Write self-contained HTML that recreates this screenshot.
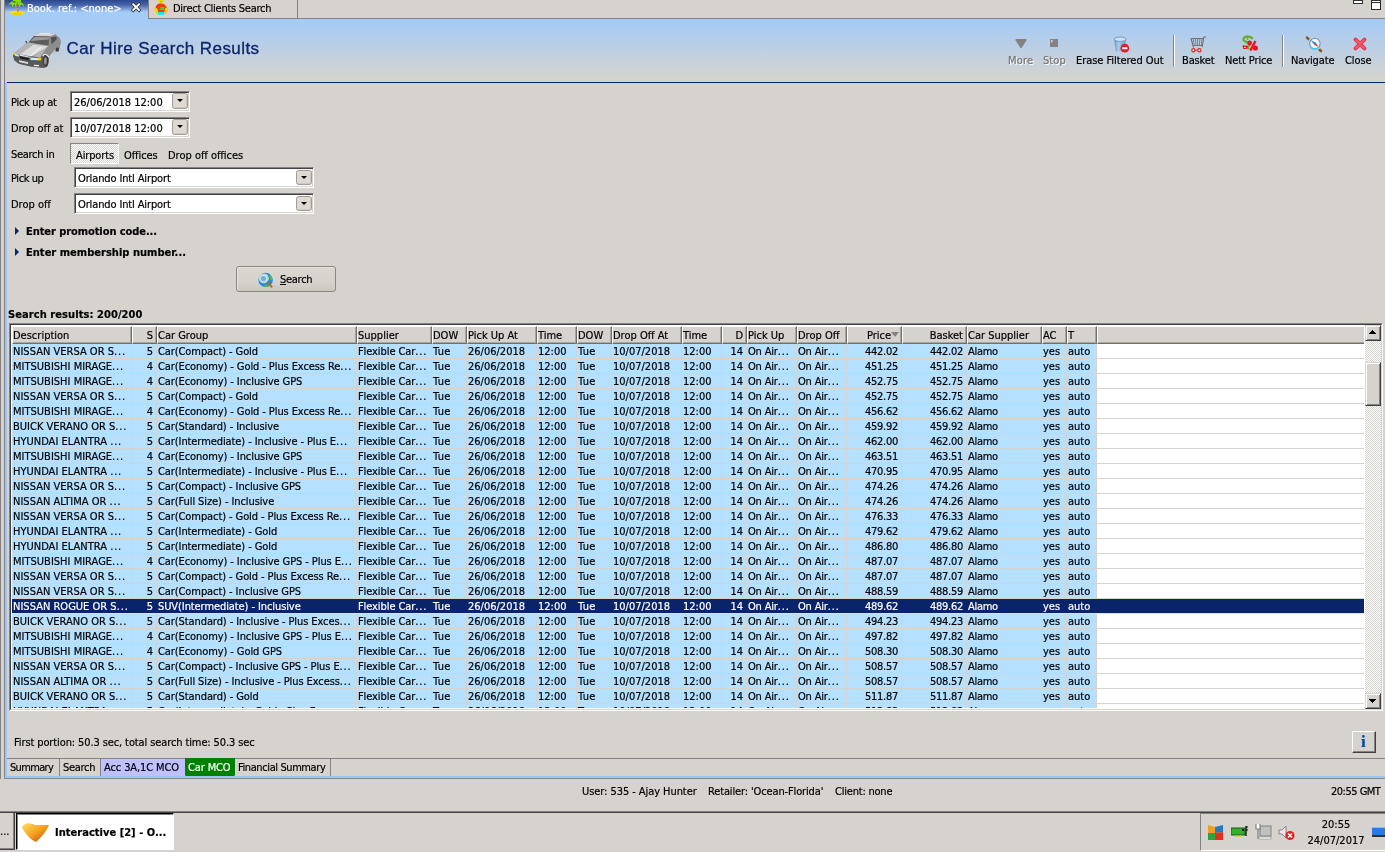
<!DOCTYPE html>
<html><head><meta charset="utf-8"><title>Car Hire Search Results</title>
<style>
html,body{margin:0;padding:0;}
body{width:1385px;height:852px;overflow:hidden;background:#d6d3ce;position:relative;
 font-family:"DejaVu Sans Condensed","DejaVu Sans","Liberation Sans",sans-serif;font-size:11px;color:#000;line-height:13px;}
div,span,i,b,svg{position:absolute;box-sizing:border-box;white-space:nowrap;}
i{display:block;font-style:normal;}
.t{height:13px;line-height:13px;margin-top:1px;}
/* chrome */
#l0{left:0;top:0;width:1px;height:779px;background:#848284;}
#l4{left:4px;top:0;width:1px;height:779px;background:#848284;}
#l5{left:5px;top:19px;width:2px;height:759px;background:#9dc5f5;}
#tabline{left:148px;top:18px;width:1237px;height:1px;background:#848284;}
#tab1{left:5px;top:0;width:143px;height:19px;background:linear-gradient(#2b4690 0px,#4664a8 5px,#a5cbf7 12px,#a5cbf7 19px);color:#fff;}
#tab2{left:148px;top:0;width:150px;height:19px;border-left:1px solid #848284;border-right:1px solid #848284;border-bottom:1px solid #848284;}
#hdr{left:5px;top:19px;width:1380px;height:63px;background:linear-gradient(#a5cbf7 0px,#a5cbf7 2px,#d6d3ce 60px,#d6d3ce 63px);}
#navy{left:7px;top:82px;width:1378px;height:1px;background:#0a246a;}
#title{-webkit-text-stroke:0.3px #0a246a;left:66.5px;top:38px;font-family:"Liberation Sans",sans-serif;font-size:17px;line-height:22px;height:22px;color:#0a246a;}
.tb{font-size:11px;height:13px;line-height:13px;top:54px;}
.dis{color:#757575;text-shadow:1px 1px 0 #fff;}
.sep{top:35px;width:2px;height:32px;border-left:1px solid #848284;border-right:1px solid #fff;}
/* inputs */
.inp{background:#fff;border:1px solid;border-color:#848284 #fff #fff #848284;box-shadow:inset 1px 1px 0 #424142, inset -1px -1px 0 #d6d3ce;}
.inp .t{left:3px;top:3px;}
.ddb{width:16px;height:16px;background:#dedad3;border:1px solid #a19d95;border-radius:2.5px;box-shadow:inset -1px -1px 0 #cdc9c1;}
.ddb:after{content:"";position:absolute;left:4px;top:5px;border:3px solid transparent;border-top:3px solid #000;border-bottom:0;}
.btn{background:#d6d3ce;border:1px solid;border-color:#fff #424142 #424142 #fff;box-shadow:inset -1px -1px 0 #848284;}
.bold{font-weight:bold;}
.tri{width:0;height:0;border:4px solid transparent;border-left:4px solid #0a246a;border-right:0;}
/* grid */
#gridwrap{left:9px;top:323px;width:1374px;height:388px;border:1px solid;border-color:#848284 #fff #fff #848284;}
#gridwrap2{left:0;top:0;width:1372px;height:386px;border:1px solid;border-color:#424142 #d6d3ce #d6d3ce #424142;background:#fff;overflow:hidden;}
#grid{left:1px;top:1px;width:1352px;height:382px;overflow:hidden;
 background:repeating-linear-gradient(#fff 0px,#fff 14px,#d6d3ce 14px,#d6d3ce 15px);background-position:0 18px;}
.hc{top:0;height:18px;background:#d6d3ce;border:1px solid;border-color:#fff #736f66 #736f66 #fff;box-shadow:inset -1px -1px 0 #a9a69e;}
.hc span{left:0px;top:2px;height:13px;line-height:13px;}
.hc.r span{left:auto;right:3px;}
.sortarrow{right:2px;top:5px;width:0;height:0;border:4px solid transparent;border-top:5px solid #848284;border-bottom:0;}
.row{left:0;width:1085px;height:15px;background:#b5e0ff;border-bottom:1px solid #d6d3ce;}
.row.sel{width:1352px;background:#0a246a;color:#fff;z-index:2;border-bottom-color:#cfe6f8;}
.c{top:1px;height:14px;line-height:14px;padding-left:1px;overflow:hidden;}
.c.r{text-align:right;padding-right:3px;padding-left:0;}
.vl{z-index:1;top:18px;width:1px;height:370px;background:#d6d3ce;}
/* scrollbar */
#sb{left:1354px;top:0;width:16px;height:384px;background:repeating-conic-gradient(#fff 0 25%,#d6d3ce 0 50%) 0 0/2px 2px;}
.sbb{left:0;width:16px;height:16px;background:#d6d3ce;border:1px solid;border-color:#d6d3ce #424142 #424142 #d6d3ce;box-shadow:inset 1px 1px 0 #fff, inset -1px -1px 0 #848284;}
/* bottom */
.btab{top:759px;height:18px;border-right:1px solid #848284;}
.btab .t{top:1px;}
#botline{left:5px;top:776px;width:1380px;height:3px;background:#9dc5f5;border-bottom:1px solid #8c8a86;}
#statline{left:0;top:811px;width:1385px;height:2px;background:#424142;border-top:1px solid #848284}
.sbtn{border:1px solid #8a8780;border-radius:3px;background:linear-gradient(#dad6cf,#d6d3ce 60%,#cbc7bf);box-shadow:inset 1px 1px 0 #e6e3dd;}
#root{left:0;top:0;width:1385px;height:852px;will-change:transform;-webkit-text-stroke:0.2px;}
.e{position:static;font-weight:normal;letter-spacing:.85px;}

</style></head>
<body>
<div id="root">
<i id="l0"></i><i id="l4"></i><i id="l5"></i>
<div id="tab1">
 <svg style="left:2px;top:0" width="20" height="16" viewBox="0 0 20 16"><ellipse cx="10" cy="12.6" rx="7.5" ry="1.9" fill="#ffe400"/><ellipse cx="10" cy="13.8" rx="5" ry="1.2" fill="#ffc800"/><path d="M9.2 2.5 L11.8 12 L10 12.2 Z" fill="#f0a000"/><path d="M9.6 5 L10.6 5 M9.8 7.5 L11 7.5 M10.2 10 L11.4 10" stroke="#c05000" stroke-width=".9"/><path d="M10 3 C8 .5 4 .5 1 5.5 C3.5 3.5 5 3.8 5.5 7.5 C6.5 4.5 7.5 4 8 4.2 C8 5.5 8 6.5 8.6 7.8 C9.2 5 9.6 4 10.2 3.6 C11.5 4.5 12.2 6 12.4 8.4 C13.2 5.5 13.6 4.8 14.2 4.6 C15.5 5 16.4 6 17 7.2 C17 4 15 .5 10 3Z M6 0 h8 v2.6 h-8z" fill="#84e000"/></svg>
 <span class="t" style="letter-spacing:0.011px;left:22px;top:1px">Book. ref.: &lt;none&gt;</span>
 <svg style="left:125px;top:2px" width="12" height="11" viewBox="0 0 12 11"><path d="M3.2 2.3 L9 8 M9 2.3 L3.2 8" stroke="#2c2c2c" stroke-width="3.4" stroke-linecap="square"/><path d="M3.2 2.3 L9 8 M9 2.3 L3.2 8" stroke="#fff" stroke-width="1.9" stroke-linecap="square"/></svg>
</div>
<div id="tab2">
 <svg style="left:4px;top:0" width="17" height="16" viewBox="0 0 17 16"><ellipse cx="7.8" cy="1.1" rx="2.5" ry="2.3" fill="#ffd400"/><ellipse cx="7.9" cy="1.6" rx="1" ry=".5" fill="#ff9000"/><path d="M4.6 4 L7 3.4 L8.6 3.4 L11 4 L14 7.2 L12 9.5 L11.5 12 L5 12 L4.6 9.5 L2.2 7.2 Z" fill="#f83a04"/><path d="M2.2 7.2 L4 8.6 L5 13.6 L3.6 14.4 L1 9.2 Z" fill="#ffd000"/><path d="M14 7.2 L12.2 8.6 L11.4 13.6 L13 14.4 L15.6 9.2 Z" fill="#ffc800"/><rect x="7.2" y="7" width="4.2" height="3" fill="#22e022"/><rect x="5" y="12" width="6.2" height="2.7" fill="#00f0e8"/></svg>
 <span class="t" style="letter-spacing:-0.257px;left:24px;top:1px">Direct Clients Search</span>
</div>
<i id="tabline"></i>
<!-- window min/max -->
<i style="left:1353px;top:0;width:10px;height:4px;border:1px solid #303030;background:#fff"></i>
<i style="left:1371px;top:0;width:10px;height:10px;border:1px solid #303030;background:#fff"></i>
<i style="left:1371px;top:2px;width:10px;height:1px;background:#303030"></i>
<div id="hdr"></div>
<i id="navy"></i>
<!-- car icon -->
<svg style="left:8px;top:28px" width="60" height="46" viewBox="0 0 60 46">
 <polygon points="5.1,28.1 5.9,25.4 17.8,15.7 20.5,14.6 25.9,8.1 28.1,5.9 32.4,5.1 41.1,5.1 47.0,6.2 51.9,10.3 52.7,14.6 50.8,22.7 47.0,23.2 41.1,29.2 40.0,37.8 36.8,40.0 22.7,38.4 10.8,35.7 6.5,32.4" fill="#858585"/>
 <polygon points="25.9,8.1 28.1,5.9 32.4,5.1 41.1,5.1 47.0,6.2 48.6,8.6 44.9,8.1 41.6,8.6" fill="#d6d6d6"/>
 <polygon points="30.3,5.7 32.4,5.1 41.1,5.1 43.2,5.8" fill="#f2f2f2"/>
 <polygon points="20.5,14.6 25.9,8.1 41.6,8.6 40.5,17.8 32.4,17.3" fill="#5e5e5e"/>
 <polygon points="22.7,13.0 26.5,8.9 41.1,9.3 40.8,11.6" fill="#9a9a9a"/>
 <polygon points="25.9,13.5 34.6,12.2 34.1,17.0 25.4,16.2" fill="#5a5a5a"/>
 <polygon points="5.9,25.4 17.8,15.7 20.5,14.6 40.5,17.8 34.6,25.9 32.4,29.5 11.9,27.0" fill="#b4b4b4"/>
 <polygon points="12.4,25.9 25.4,16.8 40.0,18.4 22.7,28.6" fill="#d9d9d9"/>
 <polygon points="21.6,28.1 32.4,18.9 33.5,19.0 23.0,28.6" fill="#f4f4f4"/>
 <polygon points="40.5,17.8 41.6,8.6 47.0,6.2 51.9,10.3 52.7,14.6 50.8,22.7 47.0,23.2 48.6,20.0 41.1,29.2 40.0,27.0 34.6,25.9" fill="#8d8d8d"/>
 <polygon points="42.7,9.5 48.1,8.6 48.9,11.1 43.8,16.2" fill="#505050"/>
 <polygon points="41.6,28.1 48.6,20.0 48.9,20.5 41.9,28.9" fill="#e8e8e8"/>
 <polygon points="5.1,28.1 5.9,25.4 11.9,27.0 32.4,29.5 34.6,25.9 35.7,33.5 36.8,40.0 22.7,38.4 10.8,35.7 6.5,32.4" fill="#5a5a5a"/>
 <polygon points="11.6,28.1 21.1,30.3 20.5,32.2 12.2,30.4" fill="#1e1e1e"/>
 <polygon points="11.9,26.5 22.7,28.9 22.2,29.8 11.6,27.7" fill="#e6e6e6"/>
 <polygon points="6.1,25.1 10.8,27.0 10.8,28.8 7.0,27.7" fill="#c4e4f8"/>
 <polygon points="5.8,25.0 7.3,25.3 7.3,27.3 6.1,27.0" fill="#e8d020"/>
 <polygon points="22.2,29.6 30.0,30.0 30.0,32.3 22.7,32.0" fill="#cdeaff"/>
 <polygon points="30.0,29.5 33.2,29.6 33.1,32.3 30.0,32.4" fill="#f2d400"/>
 <polygon points="11.1,32.3 20.0,34.3 20.0,36.1 11.1,33.9" fill="#e2e2e2"/>
 <polygon points="25.9,36.8 31.1,37.0 31.1,38.2 25.9,37.9" fill="#f0f0f0"/>
 <ellipse cx="37.8" cy="32.4" rx="2.8" ry="6.5" fill="#3a3a3a"/>
 <ellipse cx="37.4" cy="33.0" rx="1.3" ry="3.8" fill="#9a9a9a"/>
 <path d="M34.6 28.1 Q37.3 23.8 41.2 29.5" stroke="#ececec" stroke-width="1.2" fill="none"/>
 <ellipse cx="49.3" cy="21.6" rx="1.7" ry="2.2" fill="#3c3c3c"/>
 <polygon points="17.0,12.9 19.0,13.3 19.2,15.2 18.1,14.9" fill="#4a4a4a"/>
</svg>
<span id="title" style="letter-spacing:0.423px;">Car Hire Search Results</span>
<!-- toolbar -->
<svg style="left:1014px;top:38px" width="14" height="12" viewBox="0 0 14 12"><path d="M1.6 1 H12.4 V2.4 L7.6 10 H6.4 L1.6 2.4 Z" fill="#848284"/></svg>
<span class="tb dis" style="letter-spacing:0.171px;left:1008px">More</span>
<svg style="left:1050px;top:39px" width="10" height="10" viewBox="0 0 10 10"><rect x="0" y="0" width="8" height="8" fill="#848284"/><rect x="1" y="1" width="1.6" height="2.4" fill="#d0d0d0"/></svg>
<span class="tb dis" style="letter-spacing:0.075px;left:1043px">Stop</span>
<svg style="left:1112px;top:36px" width="18" height="18" viewBox="0 0 18 18"><defs><linearGradient id="bk" x1="0" x2="1"><stop offset="0" stop-color="#5f93bf"/><stop offset=".35" stop-color="#a9cde8"/><stop offset="1" stop-color="#6f9fc8"/></linearGradient></defs><path d="M2.2 3 L3.8 15.6 H12.4 L14 3 Z" fill="url(#bk)"/><ellipse cx="8.1" cy="3.2" rx="5.9" ry="2.2" fill="#cfe3f2" stroke="#6f9cc0" stroke-width="1"/><circle cx="12.8" cy="12.2" r="4.4" fill="#e0202a"/><rect x="10.2" y="11.3" width="5.2" height="1.9" fill="#fff"/></svg>
<span class="tb" style="letter-spacing:-0.051px;left:1076px">Erase Filtered Out</span>
<i class="sep" style="left:1173px"></i>
<svg style="left:1189px;top:36px" width="18" height="18" viewBox="0 0 18 18"><path d="M2 2.5 H14.5 M2 2.5 L4 9.5 H13.5 M4 9.5 L4.5 11.5" stroke="#707070" stroke-width="1.1" fill="none"/><path d="M4.2 2.5 L5.2 9.5 M6.4 2.5 L7 9.5 M8.6 2.5 V9.5 M10.8 2.5 L10.4 9.5 M13 2.5 L12.2 9.5" stroke="#848284" stroke-width="1"/><path d="M14.8 1 H17 M14.8 1 L13.2 11" stroke="#707070" stroke-width="1.1" fill="none"/><path d="M5 14.2 H10" stroke="#e02020" stroke-width="1"/><circle cx="4.4" cy="14.2" r="1.6" fill="#fff" stroke="#e02020" stroke-width="1.2"/><circle cx="10.4" cy="14.2" r="1.6" fill="#fff" stroke="#e02020" stroke-width="1.2"/></svg>
<span class="tb" style="letter-spacing:-0.155px;left:1182px">Basket</span>
<svg style="left:1240px;top:35px" width="20" height="18" viewBox="0 0 20 18"><path d="M12.5 4 C11 .6 3.8 1 3.4 4.4 C3.2 7.2 9 6.6 9.4 9.6 C9.6 12 5 12.6 2.6 10.6" stroke="#6fae24" stroke-width="2.3" fill="none"/><path d="M7.6 .6 V5" stroke="#6fae24" stroke-width="1.2"/><rect x="3" y="10.8" width="4.6" height="3.2" fill="#f01424"/><rect x="4" y="12" width="2" height=".9" fill="#ffd0d0"/><circle cx="9.6" cy="8" r="2.4" fill="#f01424"/><circle cx="15.4" cy="13" r="2.6" fill="#f01424"/><path d="M15.4 6 L10.4 15.6" stroke="#f01424" stroke-width="2.4"/><path d="M8.4 12 l1.6 2 l-2.2 .6z" fill="#6fae24"/></svg>
<span class="tb" style="letter-spacing:-0.122px;left:1225px">Nett Price</span>
<i class="sep" style="left:1282px"></i>
<svg style="left:1305px;top:34px" width="20" height="20" viewBox="0 0 20 20"><path d="M2 3.6 L16 17" stroke="#8a5a1c" stroke-width="2.6" stroke-linecap="round"/><circle cx="9.9" cy="9.6" r="6.5" fill="#eef7ff" stroke="#c4ccd6" stroke-width="1.2"/><circle cx="9.9" cy="9.6" r="5.3" fill="none" stroke="#4a90d8" stroke-width="1.1"/><path d="M5.2 12.6 A5.3 5.3 0 0 0 13.6 13.4" stroke="#38d0f0" stroke-width="1.5" fill="none"/><path d="M5.8 6.2 L10.8 8.8 L9.1 10.5 Z" fill="#1c7ce0"/><path d="M13.2 13 L9.1 10.5 L10.8 8.8 Z" fill="#f0200c"/></svg>
<span class="tb" style="letter-spacing:-0.124px;left:1291px">Navigate</span>
<svg style="left:1352.5px;top:37px" width="14" height="14" viewBox="0 0 14 14"><path d="M2.6 2.6 L11.4 11.4 M11.4 2.6 L2.6 11.4" stroke="#e83448" stroke-width="3.8" stroke-linecap="round"/><path d="M3 3 L11 11 M11 3 L3 11" stroke="#f4667a" stroke-width="1.4" stroke-linecap="round"/></svg>
<span class="tb" style="letter-spacing:-0.094px;left:1345px">Close</span>

<!-- form -->
<span class="t" style="letter-spacing:-0.294px;left:11px;top:95px">Pick up at</span>
<div class="inp" style="left:70px;top:91px;width:120px;height:21px"><span class="t">26/06/2018 12:00</span><i class="ddb" style="left:101px;top:1px"></i></div>
<span class="t" style="letter-spacing:-0.063px;left:11px;top:121px">Drop off at</span>
<div class="inp" style="left:70px;top:117px;width:120px;height:21px"><span class="t">10/07/2018 12:00</span><i class="ddb" style="left:101px;top:1px"></i></div>
<span class="t" style="letter-spacing:-0.295px;left:11px;top:147px">Search in</span>
<div style="left:70px;top:143px;width:49px;height:21px;border:1px solid;border-color:#848284 #fff #fff #848284;background:repeating-conic-gradient(#fff 0 25%,#d6d3ce 0 50%) 0 0/2px 2px"><span class="t" style="letter-spacing:-0.141px;left:5px;top:4px">Airports</span></div>
<span class="t" style="letter-spacing:-0.08px;left:124px;top:148px">Offices</span>
<span class="t" style="left:168px;top:148px">Drop off offices</span>
<span class="t" style="letter-spacing:-0.408px;left:11px;top:171px">Pick up</span>
<div class="inp" style="left:74px;top:167px;width:240px;height:21px"><span class="t" style="letter-spacing:-0.127px">Orlando Intl Airport</span><i class="ddb" style="left:221px;top:2px;height:15px"></i></div>
<span class="t" style="left:11px;top:197px">Drop off</span>
<div class="inp" style="left:74px;top:193px;width:240px;height:21px"><span class="t" style="letter-spacing:-0.127px">Orlando Intl Airport</span><i class="ddb" style="left:221px;top:2px;height:15px"></i></div>
<i class="tri" style="left:15px;top:227px"></i>
<span class="t bold" style="letter-spacing:-0.071px;left:26px;top:224px">Enter promotion code...</span>
<i class="tri" style="left:15px;top:248px"></i>
<span class="t bold" style="letter-spacing:0.028px;left:26px;top:245px">Enter membership number...</span>
<div class="sbtn" style="left:236px;top:266px;width:100px;height:26px">
 <svg style="left:20px;top:4px" width="18" height="18" viewBox="0 0 18 18"><circle cx="8.6" cy="9" r="7.2" fill="#1e8ae0"/><path d="M12.5 3.5 C15 5 15.8 8 14.6 10 C13.4 9 12.6 7 12.5 3.5Z M7 14.5 C9 13 11 13.6 11.6 15.4 C10 16.4 8.4 16.4 7 14.5Z" fill="#58c030"/><circle cx="6.8" cy="7.4" r="4.3" fill="#cfe8e8" stroke="#c8ccd4" stroke-width="1.4"/><circle cx="6.4" cy="7.6" r="2.6" fill="#5ab8d8"/><path d="M10.2 11 L15.2 16.4" stroke="#b86a18" stroke-width="2"/></svg>
 <span class="t" style="letter-spacing:-0.283px;left:43px;top:5px"><u>S</u>earch</span>
</div>
<span class="t bold" style="letter-spacing:0.081px;left:8px;top:307px">Search results: 200/200</span>

<div id="gridwrap"><div id="gridwrap2">
<div id="grid">
<div class="hc" style="left:0px;width:120px"><span>Description</span></div>
<div class="hc r" style="left:120px;width:25px"><span>S</span></div>
<div class="hc" style="left:145px;width:200px"><span>Car Group</span></div>
<div class="hc" style="left:345px;width:75px"><span>Supplier</span></div>
<div class="hc" style="left:420px;width:35px"><span>DOW</span></div>
<div class="hc" style="left:455px;width:70px"><span>Pick Up At</span></div>
<div class="hc" style="left:525px;width:40px"><span>Time</span></div>
<div class="hc" style="left:565px;width:35px"><span>DOW</span></div>
<div class="hc" style="left:600px;width:70px"><span>Drop Off At</span></div>
<div class="hc" style="left:670px;width:40px"><span>Time</span></div>
<div class="hc r" style="left:710px;width:25px"><span>D</span></div>
<div class="hc" style="left:735px;width:50px"><span>Pick Up</span></div>
<div class="hc" style="left:785px;width:50px"><span>Drop Off</span></div>
<div class="hc r" style="left:835px;width:55px"><span><b style="position:relative;font-weight:normal;right:7px">Price</b></span><i class="sortarrow"></i></div>
<div class="hc r" style="left:890px;width:65px"><span>Basket</span></div>
<div class="hc" style="left:955px;width:75px"><span>Car Supplier</span></div>
<div class="hc" style="left:1030px;width:25px"><span>AC</span></div>
<div class="hc" style="left:1055px;width:30px"><span>T</span></div>
<div class="hc" style="left:1085px;width:267px;border-right:0;box-shadow:inset 0 -1px 0 #a9a69e"></div>
<div class="row" style="top:18px">
<span class="c" style="left:0px;width:119px;letter-spacing:0.011px">NISSAN VERSA OR S<b class="e">...</b></span>
<span class="c r" style="left:120px;width:24px">5</span>
<span class="c" style="left:145px;width:199px;letter-spacing:-0.089px">Car(Compact) - Gold</span>
<span class="c" style="left:345px;width:74px;letter-spacing:-0.083px">Flexible Car<b class="e">...</b></span>
<span class="c" style="left:420px;width:34px;letter-spacing:0.283px">Tue</span>
<span class="c" style="left:455px;width:69px">26/06/2018</span>
<span class="c" style="left:525px;width:39px">12:00</span>
<span class="c" style="left:565px;width:34px;letter-spacing:0.283px">Tue</span>
<span class="c" style="left:600px;width:69px">10/07/2018</span>
<span class="c" style="left:670px;width:39px">12:00</span>
<span class="c r" style="left:710px;width:24px">14</span>
<span class="c" style="left:735px;width:49px;letter-spacing:-0.176px">On Air<b class="e">...</b></span>
<span class="c" style="left:785px;width:49px;letter-spacing:-0.176px">On Air<b class="e">...</b></span>
<span class="c r" style="left:835px;width:54px;letter-spacing:-0.25px">442.02</span>
<span class="c r" style="left:890px;width:64px;letter-spacing:-0.25px">442.02</span>
<span class="c" style="left:955px;width:74px;letter-spacing:-0.296px">Alamo</span>
<span class="c" style="left:1030px;width:24px">yes</span>
<span class="c" style="left:1055px;width:29px">auto</span>
</div>
<div class="row" style="top:33px">
<span class="c" style="left:0px;width:119px;letter-spacing:0.011px">MITSUBISHI MIRAGE<b class="e">...</b></span>
<span class="c r" style="left:120px;width:24px">4</span>
<span class="c" style="left:145px;width:199px;letter-spacing:-0.089px">Car(Economy) - Gold - Plus Excess Re<b class="e">...</b></span>
<span class="c" style="left:345px;width:74px;letter-spacing:-0.083px">Flexible Car<b class="e">...</b></span>
<span class="c" style="left:420px;width:34px;letter-spacing:0.283px">Tue</span>
<span class="c" style="left:455px;width:69px">26/06/2018</span>
<span class="c" style="left:525px;width:39px">12:00</span>
<span class="c" style="left:565px;width:34px;letter-spacing:0.283px">Tue</span>
<span class="c" style="left:600px;width:69px">10/07/2018</span>
<span class="c" style="left:670px;width:39px">12:00</span>
<span class="c r" style="left:710px;width:24px">14</span>
<span class="c" style="left:735px;width:49px;letter-spacing:-0.176px">On Air<b class="e">...</b></span>
<span class="c" style="left:785px;width:49px;letter-spacing:-0.176px">On Air<b class="e">...</b></span>
<span class="c r" style="left:835px;width:54px;letter-spacing:-0.25px">451.25</span>
<span class="c r" style="left:890px;width:64px;letter-spacing:-0.25px">451.25</span>
<span class="c" style="left:955px;width:74px;letter-spacing:-0.296px">Alamo</span>
<span class="c" style="left:1030px;width:24px">yes</span>
<span class="c" style="left:1055px;width:29px">auto</span>
</div>
<div class="row" style="top:48px">
<span class="c" style="left:0px;width:119px;letter-spacing:0.011px">MITSUBISHI MIRAGE<b class="e">...</b></span>
<span class="c r" style="left:120px;width:24px">4</span>
<span class="c" style="left:145px;width:199px;letter-spacing:-0.089px">Car(Economy) - Inclusive GPS</span>
<span class="c" style="left:345px;width:74px;letter-spacing:-0.083px">Flexible Car<b class="e">...</b></span>
<span class="c" style="left:420px;width:34px;letter-spacing:0.283px">Tue</span>
<span class="c" style="left:455px;width:69px">26/06/2018</span>
<span class="c" style="left:525px;width:39px">12:00</span>
<span class="c" style="left:565px;width:34px;letter-spacing:0.283px">Tue</span>
<span class="c" style="left:600px;width:69px">10/07/2018</span>
<span class="c" style="left:670px;width:39px">12:00</span>
<span class="c r" style="left:710px;width:24px">14</span>
<span class="c" style="left:735px;width:49px;letter-spacing:-0.176px">On Air<b class="e">...</b></span>
<span class="c" style="left:785px;width:49px;letter-spacing:-0.176px">On Air<b class="e">...</b></span>
<span class="c r" style="left:835px;width:54px;letter-spacing:-0.25px">452.75</span>
<span class="c r" style="left:890px;width:64px;letter-spacing:-0.25px">452.75</span>
<span class="c" style="left:955px;width:74px;letter-spacing:-0.296px">Alamo</span>
<span class="c" style="left:1030px;width:24px">yes</span>
<span class="c" style="left:1055px;width:29px">auto</span>
</div>
<div class="row" style="top:63px">
<span class="c" style="left:0px;width:119px;letter-spacing:0.011px">NISSAN VERSA OR S<b class="e">...</b></span>
<span class="c r" style="left:120px;width:24px">5</span>
<span class="c" style="left:145px;width:199px;letter-spacing:-0.089px">Car(Compact) - Gold</span>
<span class="c" style="left:345px;width:74px;letter-spacing:-0.083px">Flexible Car<b class="e">...</b></span>
<span class="c" style="left:420px;width:34px;letter-spacing:0.283px">Tue</span>
<span class="c" style="left:455px;width:69px">26/06/2018</span>
<span class="c" style="left:525px;width:39px">12:00</span>
<span class="c" style="left:565px;width:34px;letter-spacing:0.283px">Tue</span>
<span class="c" style="left:600px;width:69px">10/07/2018</span>
<span class="c" style="left:670px;width:39px">12:00</span>
<span class="c r" style="left:710px;width:24px">14</span>
<span class="c" style="left:735px;width:49px;letter-spacing:-0.176px">On Air<b class="e">...</b></span>
<span class="c" style="left:785px;width:49px;letter-spacing:-0.176px">On Air<b class="e">...</b></span>
<span class="c r" style="left:835px;width:54px;letter-spacing:-0.25px">452.75</span>
<span class="c r" style="left:890px;width:64px;letter-spacing:-0.25px">452.75</span>
<span class="c" style="left:955px;width:74px;letter-spacing:-0.296px">Alamo</span>
<span class="c" style="left:1030px;width:24px">yes</span>
<span class="c" style="left:1055px;width:29px">auto</span>
</div>
<div class="row" style="top:78px">
<span class="c" style="left:0px;width:119px;letter-spacing:0.011px">MITSUBISHI MIRAGE<b class="e">...</b></span>
<span class="c r" style="left:120px;width:24px">4</span>
<span class="c" style="left:145px;width:199px;letter-spacing:-0.089px">Car(Economy) - Gold - Plus Excess Re<b class="e">...</b></span>
<span class="c" style="left:345px;width:74px;letter-spacing:-0.083px">Flexible Car<b class="e">...</b></span>
<span class="c" style="left:420px;width:34px;letter-spacing:0.283px">Tue</span>
<span class="c" style="left:455px;width:69px">26/06/2018</span>
<span class="c" style="left:525px;width:39px">12:00</span>
<span class="c" style="left:565px;width:34px;letter-spacing:0.283px">Tue</span>
<span class="c" style="left:600px;width:69px">10/07/2018</span>
<span class="c" style="left:670px;width:39px">12:00</span>
<span class="c r" style="left:710px;width:24px">14</span>
<span class="c" style="left:735px;width:49px;letter-spacing:-0.176px">On Air<b class="e">...</b></span>
<span class="c" style="left:785px;width:49px;letter-spacing:-0.176px">On Air<b class="e">...</b></span>
<span class="c r" style="left:835px;width:54px;letter-spacing:-0.25px">456.62</span>
<span class="c r" style="left:890px;width:64px;letter-spacing:-0.25px">456.62</span>
<span class="c" style="left:955px;width:74px;letter-spacing:-0.296px">Alamo</span>
<span class="c" style="left:1030px;width:24px">yes</span>
<span class="c" style="left:1055px;width:29px">auto</span>
</div>
<div class="row" style="top:93px">
<span class="c" style="left:0px;width:119px;letter-spacing:0.011px">BUICK VERANO OR S<b class="e">...</b></span>
<span class="c r" style="left:120px;width:24px">5</span>
<span class="c" style="left:145px;width:199px;letter-spacing:-0.089px">Car(Standard) - Inclusive</span>
<span class="c" style="left:345px;width:74px;letter-spacing:-0.083px">Flexible Car<b class="e">...</b></span>
<span class="c" style="left:420px;width:34px;letter-spacing:0.283px">Tue</span>
<span class="c" style="left:455px;width:69px">26/06/2018</span>
<span class="c" style="left:525px;width:39px">12:00</span>
<span class="c" style="left:565px;width:34px;letter-spacing:0.283px">Tue</span>
<span class="c" style="left:600px;width:69px">10/07/2018</span>
<span class="c" style="left:670px;width:39px">12:00</span>
<span class="c r" style="left:710px;width:24px">14</span>
<span class="c" style="left:735px;width:49px;letter-spacing:-0.176px">On Air<b class="e">...</b></span>
<span class="c" style="left:785px;width:49px;letter-spacing:-0.176px">On Air<b class="e">...</b></span>
<span class="c r" style="left:835px;width:54px;letter-spacing:-0.25px">459.92</span>
<span class="c r" style="left:890px;width:64px;letter-spacing:-0.25px">459.92</span>
<span class="c" style="left:955px;width:74px;letter-spacing:-0.296px">Alamo</span>
<span class="c" style="left:1030px;width:24px">yes</span>
<span class="c" style="left:1055px;width:29px">auto</span>
</div>
<div class="row" style="top:108px">
<span class="c" style="left:0px;width:119px;letter-spacing:0.011px">HYUNDAI ELANTRA <b class="e">...</b></span>
<span class="c r" style="left:120px;width:24px">5</span>
<span class="c" style="left:145px;width:199px;letter-spacing:-0.089px">Car(Intermediate) - Inclusive - Plus E<b class="e">...</b></span>
<span class="c" style="left:345px;width:74px;letter-spacing:-0.083px">Flexible Car<b class="e">...</b></span>
<span class="c" style="left:420px;width:34px;letter-spacing:0.283px">Tue</span>
<span class="c" style="left:455px;width:69px">26/06/2018</span>
<span class="c" style="left:525px;width:39px">12:00</span>
<span class="c" style="left:565px;width:34px;letter-spacing:0.283px">Tue</span>
<span class="c" style="left:600px;width:69px">10/07/2018</span>
<span class="c" style="left:670px;width:39px">12:00</span>
<span class="c r" style="left:710px;width:24px">14</span>
<span class="c" style="left:735px;width:49px;letter-spacing:-0.176px">On Air<b class="e">...</b></span>
<span class="c" style="left:785px;width:49px;letter-spacing:-0.176px">On Air<b class="e">...</b></span>
<span class="c r" style="left:835px;width:54px;letter-spacing:-0.25px">462.00</span>
<span class="c r" style="left:890px;width:64px;letter-spacing:-0.25px">462.00</span>
<span class="c" style="left:955px;width:74px;letter-spacing:-0.296px">Alamo</span>
<span class="c" style="left:1030px;width:24px">yes</span>
<span class="c" style="left:1055px;width:29px">auto</span>
</div>
<div class="row" style="top:123px">
<span class="c" style="left:0px;width:119px;letter-spacing:0.011px">MITSUBISHI MIRAGE<b class="e">...</b></span>
<span class="c r" style="left:120px;width:24px">4</span>
<span class="c" style="left:145px;width:199px;letter-spacing:-0.089px">Car(Economy) - Inclusive GPS</span>
<span class="c" style="left:345px;width:74px;letter-spacing:-0.083px">Flexible Car<b class="e">...</b></span>
<span class="c" style="left:420px;width:34px;letter-spacing:0.283px">Tue</span>
<span class="c" style="left:455px;width:69px">26/06/2018</span>
<span class="c" style="left:525px;width:39px">12:00</span>
<span class="c" style="left:565px;width:34px;letter-spacing:0.283px">Tue</span>
<span class="c" style="left:600px;width:69px">10/07/2018</span>
<span class="c" style="left:670px;width:39px">12:00</span>
<span class="c r" style="left:710px;width:24px">14</span>
<span class="c" style="left:735px;width:49px;letter-spacing:-0.176px">On Air<b class="e">...</b></span>
<span class="c" style="left:785px;width:49px;letter-spacing:-0.176px">On Air<b class="e">...</b></span>
<span class="c r" style="left:835px;width:54px;letter-spacing:-0.25px">463.51</span>
<span class="c r" style="left:890px;width:64px;letter-spacing:-0.25px">463.51</span>
<span class="c" style="left:955px;width:74px;letter-spacing:-0.296px">Alamo</span>
<span class="c" style="left:1030px;width:24px">yes</span>
<span class="c" style="left:1055px;width:29px">auto</span>
</div>
<div class="row" style="top:138px">
<span class="c" style="left:0px;width:119px;letter-spacing:0.011px">HYUNDAI ELANTRA <b class="e">...</b></span>
<span class="c r" style="left:120px;width:24px">5</span>
<span class="c" style="left:145px;width:199px;letter-spacing:-0.089px">Car(Intermediate) - Inclusive - Plus E<b class="e">...</b></span>
<span class="c" style="left:345px;width:74px;letter-spacing:-0.083px">Flexible Car<b class="e">...</b></span>
<span class="c" style="left:420px;width:34px;letter-spacing:0.283px">Tue</span>
<span class="c" style="left:455px;width:69px">26/06/2018</span>
<span class="c" style="left:525px;width:39px">12:00</span>
<span class="c" style="left:565px;width:34px;letter-spacing:0.283px">Tue</span>
<span class="c" style="left:600px;width:69px">10/07/2018</span>
<span class="c" style="left:670px;width:39px">12:00</span>
<span class="c r" style="left:710px;width:24px">14</span>
<span class="c" style="left:735px;width:49px;letter-spacing:-0.176px">On Air<b class="e">...</b></span>
<span class="c" style="left:785px;width:49px;letter-spacing:-0.176px">On Air<b class="e">...</b></span>
<span class="c r" style="left:835px;width:54px;letter-spacing:-0.25px">470.95</span>
<span class="c r" style="left:890px;width:64px;letter-spacing:-0.25px">470.95</span>
<span class="c" style="left:955px;width:74px;letter-spacing:-0.296px">Alamo</span>
<span class="c" style="left:1030px;width:24px">yes</span>
<span class="c" style="left:1055px;width:29px">auto</span>
</div>
<div class="row" style="top:153px">
<span class="c" style="left:0px;width:119px;letter-spacing:0.011px">NISSAN VERSA OR S<b class="e">...</b></span>
<span class="c r" style="left:120px;width:24px">5</span>
<span class="c" style="left:145px;width:199px;letter-spacing:-0.089px">Car(Compact) - Inclusive GPS</span>
<span class="c" style="left:345px;width:74px;letter-spacing:-0.083px">Flexible Car<b class="e">...</b></span>
<span class="c" style="left:420px;width:34px;letter-spacing:0.283px">Tue</span>
<span class="c" style="left:455px;width:69px">26/06/2018</span>
<span class="c" style="left:525px;width:39px">12:00</span>
<span class="c" style="left:565px;width:34px;letter-spacing:0.283px">Tue</span>
<span class="c" style="left:600px;width:69px">10/07/2018</span>
<span class="c" style="left:670px;width:39px">12:00</span>
<span class="c r" style="left:710px;width:24px">14</span>
<span class="c" style="left:735px;width:49px;letter-spacing:-0.176px">On Air<b class="e">...</b></span>
<span class="c" style="left:785px;width:49px;letter-spacing:-0.176px">On Air<b class="e">...</b></span>
<span class="c r" style="left:835px;width:54px;letter-spacing:-0.25px">474.26</span>
<span class="c r" style="left:890px;width:64px;letter-spacing:-0.25px">474.26</span>
<span class="c" style="left:955px;width:74px;letter-spacing:-0.296px">Alamo</span>
<span class="c" style="left:1030px;width:24px">yes</span>
<span class="c" style="left:1055px;width:29px">auto</span>
</div>
<div class="row" style="top:168px">
<span class="c" style="left:0px;width:119px;letter-spacing:0.011px">NISSAN ALTIMA OR <b class="e">...</b></span>
<span class="c r" style="left:120px;width:24px">5</span>
<span class="c" style="left:145px;width:199px;letter-spacing:-0.089px">Car(Full Size) - Inclusive</span>
<span class="c" style="left:345px;width:74px;letter-spacing:-0.083px">Flexible Car<b class="e">...</b></span>
<span class="c" style="left:420px;width:34px;letter-spacing:0.283px">Tue</span>
<span class="c" style="left:455px;width:69px">26/06/2018</span>
<span class="c" style="left:525px;width:39px">12:00</span>
<span class="c" style="left:565px;width:34px;letter-spacing:0.283px">Tue</span>
<span class="c" style="left:600px;width:69px">10/07/2018</span>
<span class="c" style="left:670px;width:39px">12:00</span>
<span class="c r" style="left:710px;width:24px">14</span>
<span class="c" style="left:735px;width:49px;letter-spacing:-0.176px">On Air<b class="e">...</b></span>
<span class="c" style="left:785px;width:49px;letter-spacing:-0.176px">On Air<b class="e">...</b></span>
<span class="c r" style="left:835px;width:54px;letter-spacing:-0.25px">474.26</span>
<span class="c r" style="left:890px;width:64px;letter-spacing:-0.25px">474.26</span>
<span class="c" style="left:955px;width:74px;letter-spacing:-0.296px">Alamo</span>
<span class="c" style="left:1030px;width:24px">yes</span>
<span class="c" style="left:1055px;width:29px">auto</span>
</div>
<div class="row" style="top:183px">
<span class="c" style="left:0px;width:119px;letter-spacing:0.011px">NISSAN VERSA OR S<b class="e">...</b></span>
<span class="c r" style="left:120px;width:24px">5</span>
<span class="c" style="left:145px;width:199px;letter-spacing:-0.089px">Car(Compact) - Gold - Plus Excess Re<b class="e">...</b></span>
<span class="c" style="left:345px;width:74px;letter-spacing:-0.083px">Flexible Car<b class="e">...</b></span>
<span class="c" style="left:420px;width:34px;letter-spacing:0.283px">Tue</span>
<span class="c" style="left:455px;width:69px">26/06/2018</span>
<span class="c" style="left:525px;width:39px">12:00</span>
<span class="c" style="left:565px;width:34px;letter-spacing:0.283px">Tue</span>
<span class="c" style="left:600px;width:69px">10/07/2018</span>
<span class="c" style="left:670px;width:39px">12:00</span>
<span class="c r" style="left:710px;width:24px">14</span>
<span class="c" style="left:735px;width:49px;letter-spacing:-0.176px">On Air<b class="e">...</b></span>
<span class="c" style="left:785px;width:49px;letter-spacing:-0.176px">On Air<b class="e">...</b></span>
<span class="c r" style="left:835px;width:54px;letter-spacing:-0.25px">476.33</span>
<span class="c r" style="left:890px;width:64px;letter-spacing:-0.25px">476.33</span>
<span class="c" style="left:955px;width:74px;letter-spacing:-0.296px">Alamo</span>
<span class="c" style="left:1030px;width:24px">yes</span>
<span class="c" style="left:1055px;width:29px">auto</span>
</div>
<div class="row" style="top:198px">
<span class="c" style="left:0px;width:119px;letter-spacing:0.011px">HYUNDAI ELANTRA <b class="e">...</b></span>
<span class="c r" style="left:120px;width:24px">5</span>
<span class="c" style="left:145px;width:199px;letter-spacing:-0.089px">Car(Intermediate) - Gold</span>
<span class="c" style="left:345px;width:74px;letter-spacing:-0.083px">Flexible Car<b class="e">...</b></span>
<span class="c" style="left:420px;width:34px;letter-spacing:0.283px">Tue</span>
<span class="c" style="left:455px;width:69px">26/06/2018</span>
<span class="c" style="left:525px;width:39px">12:00</span>
<span class="c" style="left:565px;width:34px;letter-spacing:0.283px">Tue</span>
<span class="c" style="left:600px;width:69px">10/07/2018</span>
<span class="c" style="left:670px;width:39px">12:00</span>
<span class="c r" style="left:710px;width:24px">14</span>
<span class="c" style="left:735px;width:49px;letter-spacing:-0.176px">On Air<b class="e">...</b></span>
<span class="c" style="left:785px;width:49px;letter-spacing:-0.176px">On Air<b class="e">...</b></span>
<span class="c r" style="left:835px;width:54px;letter-spacing:-0.25px">479.62</span>
<span class="c r" style="left:890px;width:64px;letter-spacing:-0.25px">479.62</span>
<span class="c" style="left:955px;width:74px;letter-spacing:-0.296px">Alamo</span>
<span class="c" style="left:1030px;width:24px">yes</span>
<span class="c" style="left:1055px;width:29px">auto</span>
</div>
<div class="row" style="top:213px">
<span class="c" style="left:0px;width:119px;letter-spacing:0.011px">HYUNDAI ELANTRA <b class="e">...</b></span>
<span class="c r" style="left:120px;width:24px">5</span>
<span class="c" style="left:145px;width:199px;letter-spacing:-0.089px">Car(Intermediate) - Gold</span>
<span class="c" style="left:345px;width:74px;letter-spacing:-0.083px">Flexible Car<b class="e">...</b></span>
<span class="c" style="left:420px;width:34px;letter-spacing:0.283px">Tue</span>
<span class="c" style="left:455px;width:69px">26/06/2018</span>
<span class="c" style="left:525px;width:39px">12:00</span>
<span class="c" style="left:565px;width:34px;letter-spacing:0.283px">Tue</span>
<span class="c" style="left:600px;width:69px">10/07/2018</span>
<span class="c" style="left:670px;width:39px">12:00</span>
<span class="c r" style="left:710px;width:24px">14</span>
<span class="c" style="left:735px;width:49px;letter-spacing:-0.176px">On Air<b class="e">...</b></span>
<span class="c" style="left:785px;width:49px;letter-spacing:-0.176px">On Air<b class="e">...</b></span>
<span class="c r" style="left:835px;width:54px;letter-spacing:-0.25px">486.80</span>
<span class="c r" style="left:890px;width:64px;letter-spacing:-0.25px">486.80</span>
<span class="c" style="left:955px;width:74px;letter-spacing:-0.296px">Alamo</span>
<span class="c" style="left:1030px;width:24px">yes</span>
<span class="c" style="left:1055px;width:29px">auto</span>
</div>
<div class="row" style="top:228px">
<span class="c" style="left:0px;width:119px;letter-spacing:0.011px">MITSUBISHI MIRAGE<b class="e">...</b></span>
<span class="c r" style="left:120px;width:24px">4</span>
<span class="c" style="left:145px;width:199px;letter-spacing:-0.089px">Car(Economy) - Inclusive GPS - Plus E<b class="e">...</b></span>
<span class="c" style="left:345px;width:74px;letter-spacing:-0.083px">Flexible Car<b class="e">...</b></span>
<span class="c" style="left:420px;width:34px;letter-spacing:0.283px">Tue</span>
<span class="c" style="left:455px;width:69px">26/06/2018</span>
<span class="c" style="left:525px;width:39px">12:00</span>
<span class="c" style="left:565px;width:34px;letter-spacing:0.283px">Tue</span>
<span class="c" style="left:600px;width:69px">10/07/2018</span>
<span class="c" style="left:670px;width:39px">12:00</span>
<span class="c r" style="left:710px;width:24px">14</span>
<span class="c" style="left:735px;width:49px;letter-spacing:-0.176px">On Air<b class="e">...</b></span>
<span class="c" style="left:785px;width:49px;letter-spacing:-0.176px">On Air<b class="e">...</b></span>
<span class="c r" style="left:835px;width:54px;letter-spacing:-0.25px">487.07</span>
<span class="c r" style="left:890px;width:64px;letter-spacing:-0.25px">487.07</span>
<span class="c" style="left:955px;width:74px;letter-spacing:-0.296px">Alamo</span>
<span class="c" style="left:1030px;width:24px">yes</span>
<span class="c" style="left:1055px;width:29px">auto</span>
</div>
<div class="row" style="top:243px">
<span class="c" style="left:0px;width:119px;letter-spacing:0.011px">NISSAN VERSA OR S<b class="e">...</b></span>
<span class="c r" style="left:120px;width:24px">5</span>
<span class="c" style="left:145px;width:199px;letter-spacing:-0.089px">Car(Compact) - Gold - Plus Excess Re<b class="e">...</b></span>
<span class="c" style="left:345px;width:74px;letter-spacing:-0.083px">Flexible Car<b class="e">...</b></span>
<span class="c" style="left:420px;width:34px;letter-spacing:0.283px">Tue</span>
<span class="c" style="left:455px;width:69px">26/06/2018</span>
<span class="c" style="left:525px;width:39px">12:00</span>
<span class="c" style="left:565px;width:34px;letter-spacing:0.283px">Tue</span>
<span class="c" style="left:600px;width:69px">10/07/2018</span>
<span class="c" style="left:670px;width:39px">12:00</span>
<span class="c r" style="left:710px;width:24px">14</span>
<span class="c" style="left:735px;width:49px;letter-spacing:-0.176px">On Air<b class="e">...</b></span>
<span class="c" style="left:785px;width:49px;letter-spacing:-0.176px">On Air<b class="e">...</b></span>
<span class="c r" style="left:835px;width:54px;letter-spacing:-0.25px">487.07</span>
<span class="c r" style="left:890px;width:64px;letter-spacing:-0.25px">487.07</span>
<span class="c" style="left:955px;width:74px;letter-spacing:-0.296px">Alamo</span>
<span class="c" style="left:1030px;width:24px">yes</span>
<span class="c" style="left:1055px;width:29px">auto</span>
</div>
<div class="row" style="top:258px">
<span class="c" style="left:0px;width:119px;letter-spacing:0.011px">NISSAN VERSA OR S<b class="e">...</b></span>
<span class="c r" style="left:120px;width:24px">5</span>
<span class="c" style="left:145px;width:199px;letter-spacing:-0.089px">Car(Compact) - Inclusive GPS</span>
<span class="c" style="left:345px;width:74px;letter-spacing:-0.083px">Flexible Car<b class="e">...</b></span>
<span class="c" style="left:420px;width:34px;letter-spacing:0.283px">Tue</span>
<span class="c" style="left:455px;width:69px">26/06/2018</span>
<span class="c" style="left:525px;width:39px">12:00</span>
<span class="c" style="left:565px;width:34px;letter-spacing:0.283px">Tue</span>
<span class="c" style="left:600px;width:69px">10/07/2018</span>
<span class="c" style="left:670px;width:39px">12:00</span>
<span class="c r" style="left:710px;width:24px">14</span>
<span class="c" style="left:735px;width:49px;letter-spacing:-0.176px">On Air<b class="e">...</b></span>
<span class="c" style="left:785px;width:49px;letter-spacing:-0.176px">On Air<b class="e">...</b></span>
<span class="c r" style="left:835px;width:54px;letter-spacing:-0.25px">488.59</span>
<span class="c r" style="left:890px;width:64px;letter-spacing:-0.25px">488.59</span>
<span class="c" style="left:955px;width:74px;letter-spacing:-0.296px">Alamo</span>
<span class="c" style="left:1030px;width:24px">yes</span>
<span class="c" style="left:1055px;width:29px">auto</span>
</div>
<div class="row sel" style="top:273px">
<span class="c" style="left:0px;width:119px;letter-spacing:0.011px">NISSAN ROGUE OR S<b class="e">...</b></span>
<span class="c r" style="left:120px;width:24px">5</span>
<span class="c" style="left:145px;width:199px;letter-spacing:-0.089px">SUV(Intermediate) - Inclusive</span>
<span class="c" style="left:345px;width:74px;letter-spacing:-0.083px">Flexible Car<b class="e">...</b></span>
<span class="c" style="left:420px;width:34px;letter-spacing:0.283px">Tue</span>
<span class="c" style="left:455px;width:69px">26/06/2018</span>
<span class="c" style="left:525px;width:39px">12:00</span>
<span class="c" style="left:565px;width:34px;letter-spacing:0.283px">Tue</span>
<span class="c" style="left:600px;width:69px">10/07/2018</span>
<span class="c" style="left:670px;width:39px">12:00</span>
<span class="c r" style="left:710px;width:24px">14</span>
<span class="c" style="left:735px;width:49px;letter-spacing:-0.176px">On Air<b class="e">...</b></span>
<span class="c" style="left:785px;width:49px;letter-spacing:-0.176px">On Air<b class="e">...</b></span>
<span class="c r" style="left:835px;width:54px;letter-spacing:-0.25px">489.62</span>
<span class="c r" style="left:890px;width:64px;letter-spacing:-0.25px">489.62</span>
<span class="c" style="left:955px;width:74px;letter-spacing:-0.296px">Alamo</span>
<span class="c" style="left:1030px;width:24px">yes</span>
<span class="c" style="left:1055px;width:29px">auto</span>
</div>
<div class="row" style="top:288px">
<span class="c" style="left:0px;width:119px;letter-spacing:0.011px">BUICK VERANO OR S<b class="e">...</b></span>
<span class="c r" style="left:120px;width:24px">5</span>
<span class="c" style="left:145px;width:199px;letter-spacing:-0.089px">Car(Standard) - Inclusive - Plus Exces<b class="e">...</b></span>
<span class="c" style="left:345px;width:74px;letter-spacing:-0.083px">Flexible Car<b class="e">...</b></span>
<span class="c" style="left:420px;width:34px;letter-spacing:0.283px">Tue</span>
<span class="c" style="left:455px;width:69px">26/06/2018</span>
<span class="c" style="left:525px;width:39px">12:00</span>
<span class="c" style="left:565px;width:34px;letter-spacing:0.283px">Tue</span>
<span class="c" style="left:600px;width:69px">10/07/2018</span>
<span class="c" style="left:670px;width:39px">12:00</span>
<span class="c r" style="left:710px;width:24px">14</span>
<span class="c" style="left:735px;width:49px;letter-spacing:-0.176px">On Air<b class="e">...</b></span>
<span class="c" style="left:785px;width:49px;letter-spacing:-0.176px">On Air<b class="e">...</b></span>
<span class="c r" style="left:835px;width:54px;letter-spacing:-0.25px">494.23</span>
<span class="c r" style="left:890px;width:64px;letter-spacing:-0.25px">494.23</span>
<span class="c" style="left:955px;width:74px;letter-spacing:-0.296px">Alamo</span>
<span class="c" style="left:1030px;width:24px">yes</span>
<span class="c" style="left:1055px;width:29px">auto</span>
</div>
<div class="row" style="top:303px">
<span class="c" style="left:0px;width:119px;letter-spacing:0.011px">MITSUBISHI MIRAGE<b class="e">...</b></span>
<span class="c r" style="left:120px;width:24px">4</span>
<span class="c" style="left:145px;width:199px;letter-spacing:-0.089px">Car(Economy) - Inclusive GPS - Plus E<b class="e">...</b></span>
<span class="c" style="left:345px;width:74px;letter-spacing:-0.083px">Flexible Car<b class="e">...</b></span>
<span class="c" style="left:420px;width:34px;letter-spacing:0.283px">Tue</span>
<span class="c" style="left:455px;width:69px">26/06/2018</span>
<span class="c" style="left:525px;width:39px">12:00</span>
<span class="c" style="left:565px;width:34px;letter-spacing:0.283px">Tue</span>
<span class="c" style="left:600px;width:69px">10/07/2018</span>
<span class="c" style="left:670px;width:39px">12:00</span>
<span class="c r" style="left:710px;width:24px">14</span>
<span class="c" style="left:735px;width:49px;letter-spacing:-0.176px">On Air<b class="e">...</b></span>
<span class="c" style="left:785px;width:49px;letter-spacing:-0.176px">On Air<b class="e">...</b></span>
<span class="c r" style="left:835px;width:54px;letter-spacing:-0.25px">497.82</span>
<span class="c r" style="left:890px;width:64px;letter-spacing:-0.25px">497.82</span>
<span class="c" style="left:955px;width:74px;letter-spacing:-0.296px">Alamo</span>
<span class="c" style="left:1030px;width:24px">yes</span>
<span class="c" style="left:1055px;width:29px">auto</span>
</div>
<div class="row" style="top:318px">
<span class="c" style="left:0px;width:119px;letter-spacing:0.011px">MITSUBISHI MIRAGE<b class="e">...</b></span>
<span class="c r" style="left:120px;width:24px">4</span>
<span class="c" style="left:145px;width:199px;letter-spacing:-0.089px">Car(Economy) - Gold GPS</span>
<span class="c" style="left:345px;width:74px;letter-spacing:-0.083px">Flexible Car<b class="e">...</b></span>
<span class="c" style="left:420px;width:34px;letter-spacing:0.283px">Tue</span>
<span class="c" style="left:455px;width:69px">26/06/2018</span>
<span class="c" style="left:525px;width:39px">12:00</span>
<span class="c" style="left:565px;width:34px;letter-spacing:0.283px">Tue</span>
<span class="c" style="left:600px;width:69px">10/07/2018</span>
<span class="c" style="left:670px;width:39px">12:00</span>
<span class="c r" style="left:710px;width:24px">14</span>
<span class="c" style="left:735px;width:49px;letter-spacing:-0.176px">On Air<b class="e">...</b></span>
<span class="c" style="left:785px;width:49px;letter-spacing:-0.176px">On Air<b class="e">...</b></span>
<span class="c r" style="left:835px;width:54px;letter-spacing:-0.25px">508.30</span>
<span class="c r" style="left:890px;width:64px;letter-spacing:-0.25px">508.30</span>
<span class="c" style="left:955px;width:74px;letter-spacing:-0.296px">Alamo</span>
<span class="c" style="left:1030px;width:24px">yes</span>
<span class="c" style="left:1055px;width:29px">auto</span>
</div>
<div class="row" style="top:333px">
<span class="c" style="left:0px;width:119px;letter-spacing:0.011px">NISSAN VERSA OR S<b class="e">...</b></span>
<span class="c r" style="left:120px;width:24px">5</span>
<span class="c" style="left:145px;width:199px;letter-spacing:-0.089px">Car(Compact) - Inclusive GPS - Plus E<b class="e">...</b></span>
<span class="c" style="left:345px;width:74px;letter-spacing:-0.083px">Flexible Car<b class="e">...</b></span>
<span class="c" style="left:420px;width:34px;letter-spacing:0.283px">Tue</span>
<span class="c" style="left:455px;width:69px">26/06/2018</span>
<span class="c" style="left:525px;width:39px">12:00</span>
<span class="c" style="left:565px;width:34px;letter-spacing:0.283px">Tue</span>
<span class="c" style="left:600px;width:69px">10/07/2018</span>
<span class="c" style="left:670px;width:39px">12:00</span>
<span class="c r" style="left:710px;width:24px">14</span>
<span class="c" style="left:735px;width:49px;letter-spacing:-0.176px">On Air<b class="e">...</b></span>
<span class="c" style="left:785px;width:49px;letter-spacing:-0.176px">On Air<b class="e">...</b></span>
<span class="c r" style="left:835px;width:54px;letter-spacing:-0.25px">508.57</span>
<span class="c r" style="left:890px;width:64px;letter-spacing:-0.25px">508.57</span>
<span class="c" style="left:955px;width:74px;letter-spacing:-0.296px">Alamo</span>
<span class="c" style="left:1030px;width:24px">yes</span>
<span class="c" style="left:1055px;width:29px">auto</span>
</div>
<div class="row" style="top:348px">
<span class="c" style="left:0px;width:119px;letter-spacing:0.011px">NISSAN ALTIMA OR <b class="e">...</b></span>
<span class="c r" style="left:120px;width:24px">5</span>
<span class="c" style="left:145px;width:199px;letter-spacing:-0.089px">Car(Full Size) - Inclusive - Plus Excess<b class="e">...</b></span>
<span class="c" style="left:345px;width:74px;letter-spacing:-0.083px">Flexible Car<b class="e">...</b></span>
<span class="c" style="left:420px;width:34px;letter-spacing:0.283px">Tue</span>
<span class="c" style="left:455px;width:69px">26/06/2018</span>
<span class="c" style="left:525px;width:39px">12:00</span>
<span class="c" style="left:565px;width:34px;letter-spacing:0.283px">Tue</span>
<span class="c" style="left:600px;width:69px">10/07/2018</span>
<span class="c" style="left:670px;width:39px">12:00</span>
<span class="c r" style="left:710px;width:24px">14</span>
<span class="c" style="left:735px;width:49px;letter-spacing:-0.176px">On Air<b class="e">...</b></span>
<span class="c" style="left:785px;width:49px;letter-spacing:-0.176px">On Air<b class="e">...</b></span>
<span class="c r" style="left:835px;width:54px;letter-spacing:-0.25px">508.57</span>
<span class="c r" style="left:890px;width:64px;letter-spacing:-0.25px">508.57</span>
<span class="c" style="left:955px;width:74px;letter-spacing:-0.296px">Alamo</span>
<span class="c" style="left:1030px;width:24px">yes</span>
<span class="c" style="left:1055px;width:29px">auto</span>
</div>
<div class="row" style="top:363px">
<span class="c" style="left:0px;width:119px;letter-spacing:0.011px">BUICK VERANO OR S<b class="e">...</b></span>
<span class="c r" style="left:120px;width:24px">5</span>
<span class="c" style="left:145px;width:199px;letter-spacing:-0.089px">Car(Standard) - Gold</span>
<span class="c" style="left:345px;width:74px;letter-spacing:-0.083px">Flexible Car<b class="e">...</b></span>
<span class="c" style="left:420px;width:34px;letter-spacing:0.283px">Tue</span>
<span class="c" style="left:455px;width:69px">26/06/2018</span>
<span class="c" style="left:525px;width:39px">12:00</span>
<span class="c" style="left:565px;width:34px;letter-spacing:0.283px">Tue</span>
<span class="c" style="left:600px;width:69px">10/07/2018</span>
<span class="c" style="left:670px;width:39px">12:00</span>
<span class="c r" style="left:710px;width:24px">14</span>
<span class="c" style="left:735px;width:49px;letter-spacing:-0.176px">On Air<b class="e">...</b></span>
<span class="c" style="left:785px;width:49px;letter-spacing:-0.176px">On Air<b class="e">...</b></span>
<span class="c r" style="left:835px;width:54px;letter-spacing:-0.25px">511.87</span>
<span class="c r" style="left:890px;width:64px;letter-spacing:-0.25px">511.87</span>
<span class="c" style="left:955px;width:74px;letter-spacing:-0.296px">Alamo</span>
<span class="c" style="left:1030px;width:24px">yes</span>
<span class="c" style="left:1055px;width:29px">auto</span>
</div>
<div class="row" style="top:378px">
<span class="c" style="left:0px;width:119px;letter-spacing:0.011px">HYUNDAI ELANTRA <b class="e">...</b></span>
<span class="c r" style="left:120px;width:24px">5</span>
<span class="c" style="left:145px;width:199px;letter-spacing:-0.089px">Car(Intermediate) - Gold - Plus E<b class="e">...</b></span>
<span class="c" style="left:345px;width:74px;letter-spacing:-0.083px">Flexible Car<b class="e">...</b></span>
<span class="c" style="left:420px;width:34px;letter-spacing:0.283px">Tue</span>
<span class="c" style="left:455px;width:69px">26/06/2018</span>
<span class="c" style="left:525px;width:39px">12:00</span>
<span class="c" style="left:565px;width:34px;letter-spacing:0.283px">Tue</span>
<span class="c" style="left:600px;width:69px">10/07/2018</span>
<span class="c" style="left:670px;width:39px">12:00</span>
<span class="c r" style="left:710px;width:24px">14</span>
<span class="c" style="left:735px;width:49px;letter-spacing:-0.176px">On Air<b class="e">...</b></span>
<span class="c" style="left:785px;width:49px;letter-spacing:-0.176px">On Air<b class="e">...</b></span>
<span class="c r" style="left:835px;width:54px;letter-spacing:-0.25px">512.82</span>
<span class="c r" style="left:890px;width:64px;letter-spacing:-0.25px">512.82</span>
<span class="c" style="left:955px;width:74px;letter-spacing:-0.296px">Alamo</span>
<span class="c" style="left:1030px;width:24px">yes</span>
<span class="c" style="left:1055px;width:29px">auto</span>
</div>
<i class="vl" style="left:119px"></i>
<i class="vl" style="left:144px"></i>
<i class="vl" style="left:344px"></i>
<i class="vl" style="left:419px"></i>
<i class="vl" style="left:454px"></i>
<i class="vl" style="left:524px"></i>
<i class="vl" style="left:564px"></i>
<i class="vl" style="left:599px"></i>
<i class="vl" style="left:669px"></i>
<i class="vl" style="left:709px"></i>
<i class="vl" style="left:734px"></i>
<i class="vl" style="left:784px"></i>
<i class="vl" style="left:834px"></i>
<i class="vl" style="left:889px"></i>
<i class="vl" style="left:954px"></i>
<i class="vl" style="left:1029px"></i>
<i class="vl" style="left:1054px"></i>
<i class="vl" style="left:1084px"></i>
</div>
<div id="sb">
 <i class="sbb" style="top:0"><svg style="left:3px;top:4px" width="8" height="5" shape-rendering="crispEdges"><path d="M0 4 H7 L3.5 0Z" fill="#000"/></svg></i>
 <i class="sbb" style="top:37px;height:44px"></i>
 <i class="sbb" style="top:368px"><svg style="left:3px;top:5px" width="8" height="5" shape-rendering="crispEdges"><path d="M0 0 H7 L3.5 4Z" fill="#000"/></svg></i>
</div>
</div></div>

<span class="t" style="letter-spacing:-0.11px;left:14px;top:735px">First portion: 50.3 sec, total search time: 50.3 sec</span>
<div class="btn" style="left:1352px;top:731px;width:24px;height:22px"><span style="left:8px;top:1px;font-family:'Liberation Serif',serif;font-weight:bold;font-size:17px;line-height:18px;color:#0a4aa0">i</span></div>
<i style="left:7px;top:758px;width:1378px;height:1px;background:#848284"></i>
<div class="btab" style="left:7px;width:53px"><span class="t" style="letter-spacing:-0.661px;left:3px">Summary</span></div>
<div class="btab" style="left:60px;width:41px"><span class="t" style="letter-spacing:-0.297px;left:3px">Search</span></div>
<div class="btab" style="left:101px;width:84px;background:#c0c0ff;border-right:0"><span class="t" style="letter-spacing:-0.116px;left:3px">Acc 3A,1C MCO</span></div>
<div class="btab" style="left:185px;top:758px;height:19px;width:50px;background:#008000;color:#fff;border-right:0;border-radius:0 0 3px 3px"><span class="t" style="letter-spacing:-0.134px;left:3px;top:2px">Car MCO</span></div>
<div class="btab" style="left:235px;width:96px"><span class="t" style="letter-spacing:-0.402px;left:3px">Financial Summary</span></div>
<i id="botline"></i>
<span class="t" style="letter-spacing:-0.065px;left:582px;top:784px">User: 535 - Ajay Hunter</span>
<span class="t" style="letter-spacing:-0.136px;left:708px;top:784px">Retailer: 'Ocean-Florida'</span>
<span class="t" style="letter-spacing:-0.211px;left:835px;top:784px">Client: none</span>
<span class="t" style="letter-spacing:-0.502px;left:1331px;top:784px">20:55 GMT</span>
<i id="statline"></i>
<!-- taskbar -->
<div style="left:0;top:813px;width:15px;height:37px;border-right:1px solid #424142;border-bottom:1px solid #424142;box-shadow:inset -1px -1px 0 #848284"><span class="t" style="left:0;top:11px">...</span></div>
<div style="left:16px;top:813px;width:158px;height:37px;background:#fff;border:1px solid;border-color:#000 #fff #fff #000;box-shadow:inset 1px 1px 0 #848284">
 <svg style="left:4px;top:8px" width="30" height="22" viewBox="0 0 30 22"><defs><linearGradient id="og" x1="0" y1="0" x2="1" y2="1"><stop offset="0" stop-color="#ffe060"/><stop offset=".5" stop-color="#f8a020"/><stop offset="1" stop-color="#b84800"/></linearGradient></defs><path d="M1 5 C4 0 10 1 14 3 L28 3 C26 8 20 16 15 20 C10 18 3 11 1 5Z" fill="url(#og)"/></svg>
 <span class="t bold" style="letter-spacing:0.027px;left:38px;top:11px">Interactive [2] - O...</span>
</div>
<div style="left:1200px;top:813px;width:185px;height:38px;border-left:1px solid #848284;border-top:1px solid #848284;border-bottom:1px solid #fff"></div>
<svg style="left:1207px;top:824px" width="17" height="17" viewBox="0 0 17 17"><path d="M1 1 L8 3 V9 H1Z" fill="#f0a020"/><path d="M8 3 L16 1 V8 L8 9Z" fill="#2878c8"/><path d="M1 9 H8 V16 H1Z" fill="#30a040"/><path d="M8 9 L16 8 V16 H8Z" fill="#e03020"/></svg>
<svg style="left:1231px;top:825px" width="18" height="13" viewBox="0 0 18 13"><rect x="0" y="3" width="14" height="7" fill="#30b030" stroke="#106010" stroke-width="1"/><rect x="11" y="4" width="2" height="2" fill="#000"/><path d="M15 1 V11 M15 2 H17 M15 5 H17" stroke="#000" stroke-width="1.2"/><path d="M4 11 H10" stroke="#e0c000" stroke-width="1.6" stroke-dasharray="1.5 1"/></svg>
<svg style="left:1255px;top:823px" width="18" height="18" viewBox="0 0 18 18"><rect x="5" y="3" width="11" height="10" fill="#c0c0c0" stroke="#848284" stroke-width="1"/><rect x="4" y="14" width="12" height="2" fill="#fff" stroke="#848284" stroke-width=".6"/><path d="M1 1 V6 H5 V1 M3 6 V16" stroke="#848284" stroke-width="1.2" fill="#fff"/></svg>
<svg style="left:1278px;top:824px" width="18" height="18" viewBox="0 0 18 18"><path d="M1 6 H4 L8 2 V14 L4 10 H1Z" fill="#e8e8e8" stroke="#848284" stroke-width="1"/><circle cx="12" cy="11.5" r="4.5" fill="#e02020"/><path d="M10 9.5 L14 13.5 M14 9.5 L10 13.5" stroke="#fff" stroke-width="1.5"/></svg>
<span class="t" style="left:1306px;top:817px;width:60px;text-align:center">20:55</span>
<span class="t" style="left:1306px;top:833px;width:60px;text-align:center">24/07/2017</span>
<svg style="left:1372px;top:826px" width="13" height="13" viewBox="0 0 13 13"><rect x="0" y="1" width="13" height="9" fill="#2a78e0"/><rect x="0" y="9" width="13" height="2" fill="#303030"/><rect x="0" y="1" width="13" height="1" fill="#8ac0ff"/></svg>

</div>
</body></html>
